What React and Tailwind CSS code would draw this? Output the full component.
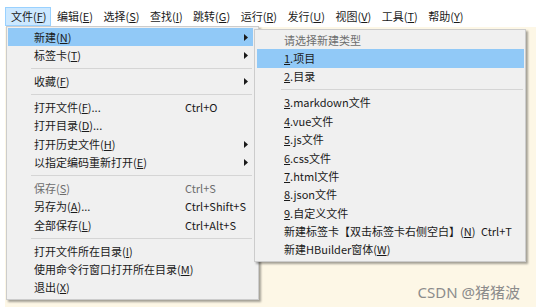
const menubar = [
  ['文件', 'F'], ['编辑', 'E'], ['选择', 'S'], ['查找', 'I'], ['跳转', 'G'],
  ['运行', 'R'], ['发行', 'U'], ['视图', 'V'], ['工具', 'T'], ['帮助', 'Y'],
]

// label, key, suffix, shortcut, arrow, disabled, active
const fileMenu = [
  { label: '新建', k: 'N', arrow: true, active: true },
  { label: '标签卡', k: 'T', arrow: true },
  'sep',
  { label: '收藏', k: 'F', arrow: true },
  'sep',
  { label: '打开文件', k: 'F', tail: '...', sc: 'Ctrl+O' },
  { label: '打开目录', k: 'D', tail: '...' },
  { label: '打开历史文件', k: 'H', arrow: true },
  { label: '以指定编码重新打开', k: 'E', arrow: true },
  'sep',
  { label: '保存', k: 'S', sc: 'Ctrl+S', disabled: true },
  { label: '另存为', k: 'A', tail: '...', sc: 'Ctrl+Shift+S' },
  { label: '全部保存', k: 'L', sc: 'Ctrl+Alt+S' },
  'sep',
  { label: '打开文件所在目录', k: 'I' },
  { label: '使用命令行窗口打开所在目录', k: 'M' },
  { label: '退出', k: 'X' },
]

const newMenu = [
  { text: '请选择新建类型', disabled: true },
  { n: '1', text: '项目', active: true },
  { n: '2', text: '目录' },
  'sep',
  { n: '3', text: 'markdown文件' },
  { n: '4', text: 'vue文件' },
  { n: '5', text: 'js文件' },
  { n: '6', text: 'css文件' },
  { n: '7', text: 'html文件' },
  { n: '8', text: 'json文件' },
  { n: '9', text: '自定义文件' },
  { label: '新建标签卡【双击标签卡右侧空白】', k: 'N', sc: 'Ctrl+T' },
  { label: '新建HBuilder窗体', k: 'W' },
]

function Arrow() {
  return (
    <svg width="4" height="7" viewBox="0 0 4 7" className="ml-auto mr-[5px]">
      <path d="M0 0 L4 3.5 L0 7 Z" fill="#1a1a1a" />
    </svg>
  )
}

function Sep({ indent }) {
  return (
    <div className="h-[7.5px] flex items-center">
      <div className={`h-px bg-[#d5d5d5] flex-1 ${indent} mr-[1px]`} />
    </div>
  )
}

function Label({ item }) {
  if (item.n) {
    return (
      <span>
        <u>{item.n}</u>.{item.text}
      </span>
    )
  }
  if (item.text) return <span>{item.text}</span>
  return (
    <span>
      {item.label}(<u>{item.k}</u>){item.tail}
    </span>
  )
}

function Menu({ items, labelW, indent, sepIndent }) {
  return (
    <div className="flex flex-col">
      {items.map((it, i) =>
        it === 'sep' ? (
          <Sep key={i} indent={sepIndent} />
        ) : (
          <div
            key={i}
            className={`h-[18.4px] flex items-center ${indent} ${
              it.active ? 'bg-[#91c9f7]' : ''
            } ${it.disabled ? 'text-[#6d6d6d]' : 'text-[#1a1a1a]'}`}
          >
            <span className={`${labelW} shrink-0 whitespace-nowrap`}>
              <Label item={it} />
            </span>
            {it.sc && <span className="whitespace-nowrap">{it.sc}</span>}
            {it.arrow && <Arrow />}
          </div>
        )
      )}
    </div>
  )
}

export default function App() {
  return (
    <div className="relative w-[536px] h-[307px] overflow-hidden bg-white text-[11px] leading-none font-['Noto_Sans_CJK_SC','Noto_Sans',sans-serif]">
      {/* menu bar */}
      <div className="h-[27px] bg-white flex items-start pt-[7px] pl-[5px]">
        {menubar.map(([t, k], i) => (
          <div
            key={k}
            className={`h-[19px] flex items-center pl-[5px] pr-[3.5px] border text-[#1a1a1a] ${
              i === 0 ? 'bg-[#cce8ff] border-[#99d1ff]' : 'border-transparent'
            }`}
          >
            {t}(<u>{k}</u>)
          </div>
        ))}
      </div>

      {/* editor area */}
      <div className="h-[280px] flex">
        <div className="w-[5px] bg-white" />
        <div className="flex-1 bg-[#fdf7e6] flex items-end justify-end pr-[16px] pb-[7px]">
          <span className="text-[15px] text-[#8c8c8c] font-['Noto_Sans','Noto_Sans_CJK_SC',sans-serif]">
            CSDN @猪猪波
          </span>
        </div>
      </div>

      {/* file menu */}
      <div className="absolute left-[6px] top-[26px] w-[253px] bg-[#f0f0f0] border border-[#cccccc] pt-[1px] pb-[2px] pl-[1px] pr-[5px] shadow-[2px_2px_2px_rgba(0,0,0,0.35)]">
        <Menu items={fileMenu} labelW="w-[151px]" indent="pl-[26px]" sepIndent="ml-[23px]" />
      </div>

      {/* new submenu */}
      <div className="absolute left-[254px] top-[29px] w-[272px] bg-[#f0f0f0] border border-[#cccccc] pt-[1px] pb-[2px] pl-[2px] pr-[1px] shadow-[2px_2px_2px_rgba(0,0,0,0.35)]">
        <Menu items={newMenu} labelW="w-[197px]" indent="pl-[27px]" sepIndent="ml-[24px]" />
      </div>
    </div>
  )
}
